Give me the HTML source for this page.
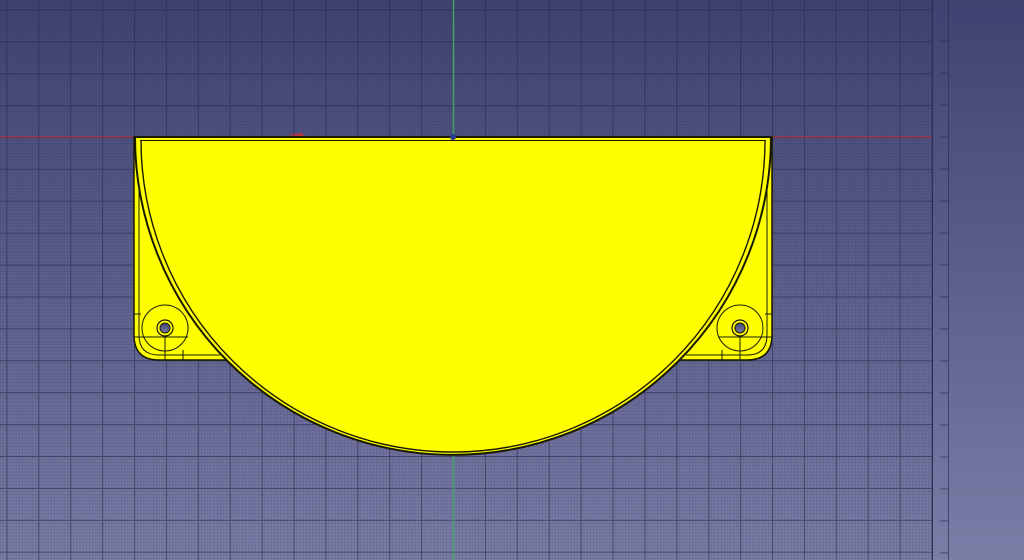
<!DOCTYPE html>
<html><head><style>
html,body{margin:0;padding:0;width:1024px;height:560px;overflow:hidden}
</style></head><body>
<svg width="1024" height="560" viewBox="0 0 1024 560" xmlns="http://www.w3.org/2000/svg">
<defs>
<linearGradient id="bg" x1="0" y1="0" x2="0" y2="1">
<stop offset="0" stop-color="#3f4270"/>
<stop offset="1" stop-color="#7b7da7"/>
</linearGradient>
<pattern id="minor" x="453" y="137" width="3.19" height="3.19" patternUnits="userSpaceOnUse">
<path d="M0 0H3.19M0 0V3.19" stroke="#2c2e55" stroke-width="0.6" opacity="0.4" fill="none"/>
</pattern>
<pattern id="major" x="453" y="137" width="31.9" height="31.9" patternUnits="userSpaceOnUse">
<path d="M0 0.5H31.9M0.5 0V31.9" stroke="#262848" stroke-width="1.2" opacity="0.55" fill="none"/>
</pattern>
</defs>
<rect width="1024" height="560" fill="url(#bg)"/>
<rect width="932" height="560" fill="url(#minor)"/>
<rect width="932" height="560" fill="url(#major)"/>
<line x1="932.5" y1="0" x2="932.5" y2="560" stroke="#2c2e55" stroke-width="1"/>
<line x1="948.5" y1="0" x2="948.5" y2="560" stroke="#2c2e55" stroke-width="1" opacity="0.7"/>
<g stroke="#2c2e55" stroke-width="1" opacity="0.7">
<line x1="940" y1="41" x2="948" y2="41"/><line x1="940" y1="73" x2="948" y2="73"/><line x1="940" y1="105" x2="948" y2="105"/><line x1="940" y1="137" x2="948" y2="137"/><line x1="940" y1="169" x2="948" y2="169"/><line x1="940" y1="201" x2="948" y2="201"/><line x1="940" y1="233" x2="948" y2="233"/><line x1="940" y1="265" x2="948" y2="265"/><line x1="940" y1="297" x2="948" y2="297"/><line x1="940" y1="329" x2="948" y2="329"/><line x1="940" y1="361" x2="948" y2="361"/><line x1="940" y1="393" x2="948" y2="393"/><line x1="940" y1="425" x2="948" y2="425"/><line x1="940" y1="457" x2="948" y2="457"/><line x1="940" y1="489" x2="948" y2="489"/><line x1="940" y1="521" x2="948" y2="521"/><line x1="940" y1="553" x2="948" y2="553"/>
</g>
<line x1="0" y1="137" x2="932" y2="137" stroke="#c0303a" stroke-width="1"/>
<line x1="453.5" y1="0" x2="453.5" y2="560" stroke="#3aa860" stroke-width="1.5"/>
<g fill="#ffff00" stroke="#1a1a00" stroke-width="1.5">
<path d="M134 137 V335 Q134 360 159 360 H225 L300 360 L300 137 Z"/>
<path d="M772 137 V335 Q772 360 747 360 H681 L606 360 L606 137 Z"/>
</g>
<g fill="none" stroke="#1a1a00" stroke-width="1">
<path d="M139 142 V335 Q139 355 159 355 H220"/>
<path d="M767 142 V335 Q767 355 747 355 H686"/>
<circle cx="165" cy="328" r="23"/>
<circle cx="740" cy="328" r="23"/>
<path d="M134 314 H141 M134 337 H188 M165 337 V360 M183 350 V360"/>
<path d="M772 314 H765 M772 337 H718 M740 337 V360 M722 350 V360"/>
</g>
<g fill="#ffff00" stroke="#1a1a00" stroke-width="1.2">
<circle cx="165" cy="328" r="8"/><circle cx="740" cy="328" r="8"/>
</g>
<g fill="url(#bg)" stroke="#1a1a00" stroke-width="1">
<circle cx="165" cy="328" r="5"/><circle cx="740" cy="328" r="5"/>
</g>
<path d="M135 137 A318 318 0 0 0 771 137 Z" fill="#ffff00" stroke="#1a1a00" stroke-width="2"/>
<path d="M141 140 A312 312 0 0 0 765 140" fill="none" stroke="#1a1a00" stroke-width="1.4"/>
<line x1="140" y1="140.5" x2="766" y2="140.5" stroke="#1a1a00" stroke-width="1"/>
<line x1="134" y1="137" x2="772" y2="137" stroke="#1a1a00" stroke-width="2"/>
<circle cx="453" cy="137" r="3" fill="#2a3a90"/>
<path d="M286 135 L303 133 L303 136 Z" fill="#c0303a"/>
</svg>
</body></html>
